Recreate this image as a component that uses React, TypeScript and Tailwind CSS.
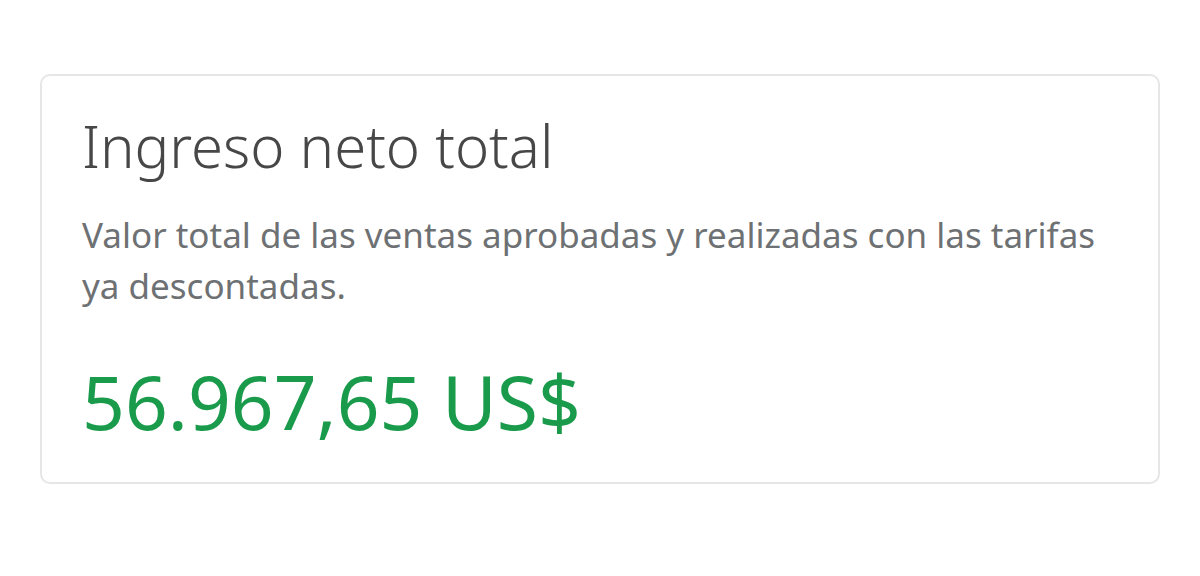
export default function App() {
  return (
    <div className="min-h-screen bg-white px-[40px] pt-[74px] font-['Noto_Sans',sans-serif]">
      <div className="h-[410px] rounded-[10px] border-2 border-[#e6e6e6] bg-white px-[40px] pt-[34px]">
        <h1 className="text-[58px] font-light leading-[72px] text-[#474747]">Ingreso neto total</h1>
        <p className="mt-[27px] max-w-[1030px] text-[35px] leading-[51px] text-[#6e7173]">
          Valor total de las ventas aprobadas y realizadas con las tarifas ya descontadas.
        </p>
        <div className="mt-[50px] text-[75px] leading-[80px] text-[#1a9b4b]">56.967,65 US$</div>
      </div>
    </div>
  );
}
